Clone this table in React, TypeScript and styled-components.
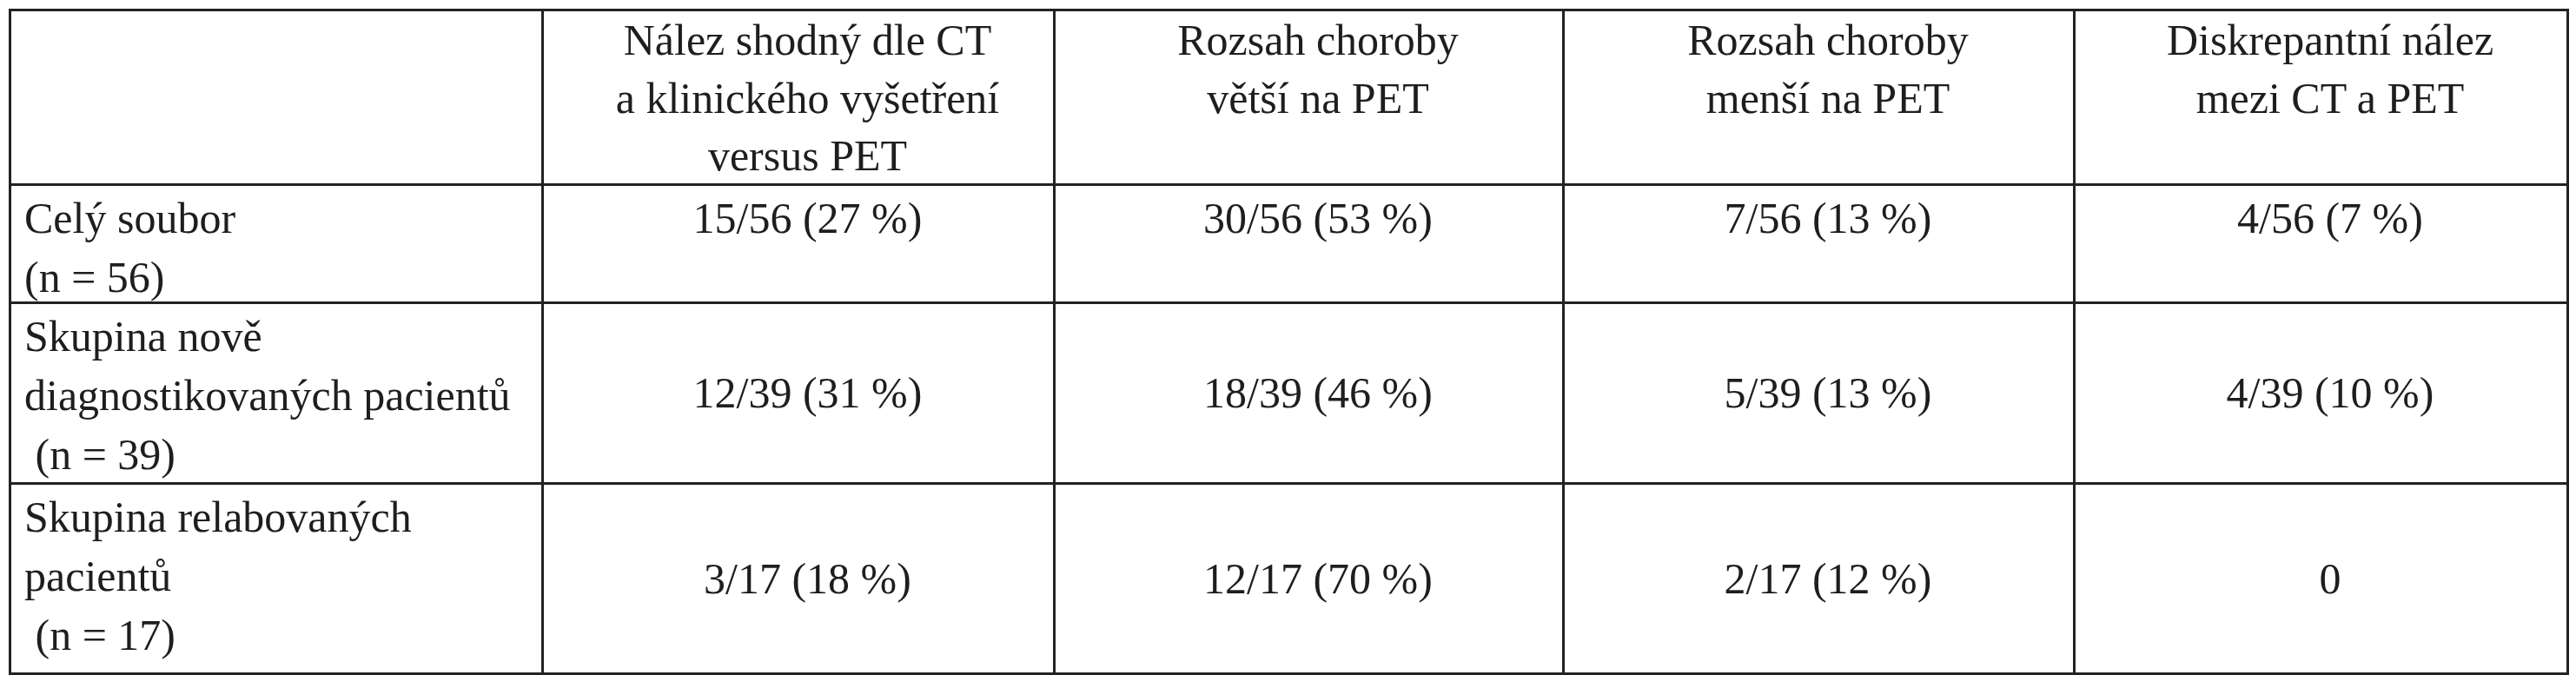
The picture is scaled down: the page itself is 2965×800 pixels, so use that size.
import React from 'react';
import styled, { createGlobalStyle, css } from 'styled-components';

const GlobalStyle = createGlobalStyle`
  html, body {
    margin: 0;
    padding: 0;
    background: #fff;
  }
  body {
    font-family: "Liberation Serif", "Times New Roman", serif;
    color: #1e1e1e;
  }
`;

const Page = styled.div`
  padding: 10px 0 0 10px;
`;

const Table = styled.div`
  display: grid;
  grid-template-columns: 612.5px 589px 586px 588px 568px;
  grid-template-rows: 201px 135.5px 208px 219px;
  width: max-content;
  border-top: 3px solid #222;
  border-left: 3px solid #222;
`;

const cellBase = css`
  box-sizing: border-box;
  border-right: 3px solid #222;
  border-bottom: 3px solid #222;
  display: flex;
  flex-direction: column;
  font-size: 50px;
  white-space: nowrap;
  min-height: 0;
`;

const HeadCell = styled.div`
  ${cellBase};
  align-items: center;
  padding: 0 0 0 22px;
  line-height: 66.5px;
`;

const LabelCell = styled.div`
  ${cellBase};
  align-items: flex-start;
  padding: 3px 0 0 15px;
  line-height: 68px;
`;

const ValueCell = styled.div<{ $middle?: boolean }>`
  ${cellBase};
  align-items: center;
  justify-content: ${p => (p.$middle ? 'center' : 'flex-start')};
  padding: ${p => (p.$middle ? '0 0 0 22px' : '3px 0 0 22px')};
  line-height: 68px;
`;

const Line = styled.span`
  display: block;
`;

const headers: string[][] = [
  [],
  ['Nález shodný dle CT', 'a klinického vyšetření', 'versus PET'],
  ['Rozsah choroby', 'větší na PET'],
  ['Rozsah choroby', 'menší na PET'],
  ['Diskrepantní nález', 'mezi CT a PET'],
];

type Row = { label: string[]; values: string[]; middle: boolean };

const rows: Row[] = [
  {
    label: ['Celý soubor', '(n = 56)'],
    values: ['15/56 (27 %)', '30/56 (53 %)', '7/56 (13 %)', '4/56 (7 %)'],
    middle: false,
  },
  {
    label: ['Skupina nově', 'diagnostikovaných pacientů', '\u00a0(n = 39)'],
    values: ['12/39 (31 %)', '18/39 (46 %)', '5/39 (13 %)', '4/39 (10 %)'],
    middle: true,
  },
  {
    label: ['Skupina relabovaných', 'pacientů', '\u00a0(n = 17)'],
    values: ['3/17 (18 %)', '12/17 (70 %)', '2/17 (12 %)', '0'],
    middle: true,
  },
];

const App: React.FC = () => (
  <>
    <GlobalStyle />
    <Page>
      <Table>
        {headers.map((lines, i) => (
          <HeadCell key={`h${i}`}>
            {lines.map(l => (
              <Line key={l}>{l}</Line>
            ))}
          </HeadCell>
        ))}
        {rows.map((row, r) => (
          <React.Fragment key={r}>
            <LabelCell>
              {row.label.map(l => (
                <Line key={l}>{l}</Line>
              ))}
            </LabelCell>
            {row.values.map((v, c) => (
              <ValueCell key={c} $middle={row.middle}>
                <Line>{v}</Line>
              </ValueCell>
            ))}
          </React.Fragment>
        ))}
      </Table>
    </Page>
  </>
);

export default App;
